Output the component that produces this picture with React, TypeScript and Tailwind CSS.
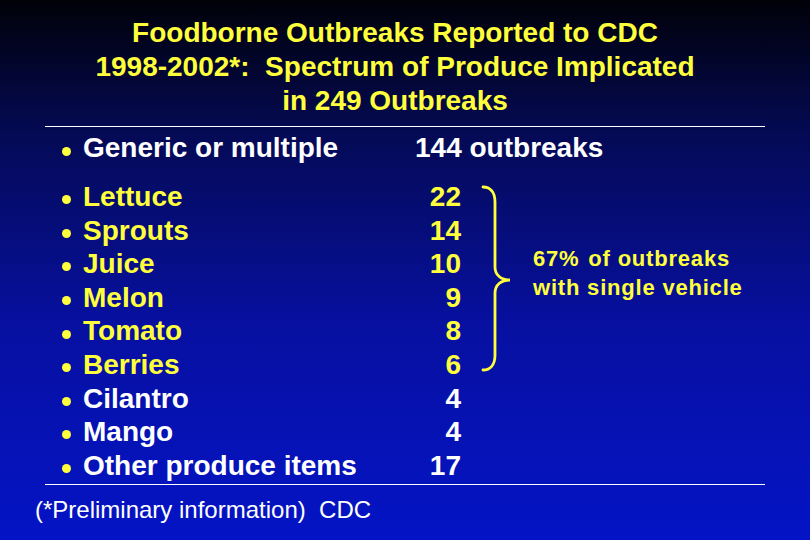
const rows = [
  { label: "Lettuce", n: "22", yellow: true },
  { label: "Sprouts", n: "14", yellow: true },
  { label: "Juice", n: "10", yellow: true },
  { label: "Melon", n: "9", yellow: true },
  { label: "Tomato", n: "8", yellow: true },
  { label: "Berries", n: "6", yellow: true },
  { label: "Cilantro", n: "4", yellow: false },
  { label: "Mango", n: "4", yellow: false },
  { label: "Other produce items", n: "17", yellow: false },
];

function Bullet() {
  return <span className="ml-[62px] mr-[12px] mt-[6px] h-[9px] w-[9px] shrink-0 rounded-full bg-[#ffff3c]" />;
}

export default function App() {
  return (
    <main
      className="flex h-[540px] w-[810px] flex-col overflow-hidden bg-[linear-gradient(to_bottom,#010108_0%,#040a55_25%,#0710a0_60%,#0414c6_100%)] font-['Liberation_Sans',Arial,sans-serif] text-white"
    >
      <header className="pt-[16px] pr-[20px] text-center text-[28px] font-bold leading-[34px] text-[#ffff3c]">
        <p>Foodborne Outbreaks Reported to CDC</p>
        <p className="whitespace-pre">1998-2002*:  Spectrum of Produce Implicated</p>
        <p>in 249 Outbreaks</p>
      </header>

      <div className="mx-[45px] mt-[8px] h-px bg-white" />

      <div className="mt-[4px] flex items-center text-[28px] font-bold leading-[34px]">
        <Bullet />
        <span className="w-[332px]">Generic or multiple</span>
        <span>144 outbreaks</span>
      </div>

      <section className="mt-[15px] flex items-start">
        <div className="flex flex-col text-[28px] font-bold leading-[33.6px]">
          {rows.map((r) => (
            <div key={r.label} className={`flex items-center ${r.yellow ? "text-[#ffff3c]" : "text-white"}`}>
              <Bullet />
              <span className="w-[317px]">{r.label}</span>
              <span className="w-[61px] text-right">{r.n}</span>
            </div>
          ))}
        </div>

        {/* brace grouping the single-vehicle items */}
        <svg className="ml-[19px] mt-[3px] shrink-0" width="32" height="192" viewBox="0 0 32 192" fill="none">
          <path
            d="M3 4 C10 4 15 9 15 19 L15 84 C15 92 21 97 30 97 C21 97 15 102 15 110 L15 172 C15 182 10 187 3 187"
            stroke="#ffff3c"
            strokeWidth="2.8"
            strokeLinecap="round"
          />
        </svg>

        <div className="ml-[21px] mt-[64px] text-[22px] font-bold leading-[29px] tracking-[0.8px] text-[#ffff3c]">
          <p>
            67% <span className="ml-[2px]">of outbreaks</span>
          </p>
          <p>with single vehicle</p>
        </div>
      </section>

      <div className="mx-[45px] mt-[2px] h-px bg-white" />

      <p className="ml-[35px] mt-[11px] whitespace-pre text-[24px] leading-[28px]">(*Preliminary information)  CDC</p>
    </main>
  );
}
